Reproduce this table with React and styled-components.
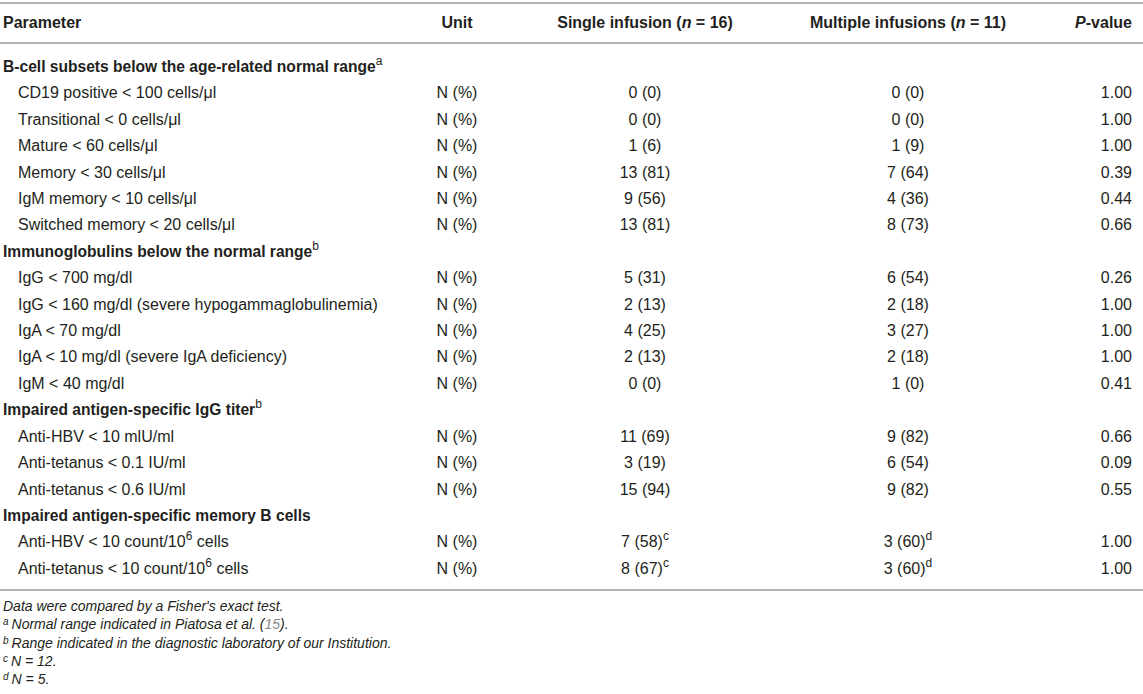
import styled, { createGlobalStyle } from 'styled-components';

const GlobalStyle = createGlobalStyle`
    body {
        margin: 0;
        background: #fff;
        font-family: "Liberation Sans", Arial, sans-serif;
        color: #231f20;
    }
`;

const Wrap = styled.div`
    width: 1143px;
    padding-top: 2px;
`;

const Table = styled.table`
    width: 100%;
    border-collapse: collapse;
    table-layout: fixed;
    font-size: 16px;
`;

const Head = styled.thead`
    border-top: 2px solid #b4b4b4;
    border-bottom: 2px solid #b4b4b4;
`;

const Th = styled.th`
    height: 38px;
    padding: 0 ${p => (p.$align === 'right' ? '11px' : '3px')};
    font-weight: bold;
    text-align: ${p => p.$align || 'center'};
    white-space: nowrap;
`;

const Body = styled.tbody`
    border-bottom: 2px solid #b4b4b4;

    tr:first-child td {
        padding-top: 10px;
    }
    tr:last-child td {
        padding-bottom: 7px;
    }
`;

const Td = styled.td`
    height: 26.4px;
    line-height: 26.4px;
    padding: 0 ${p => (p.$align === 'right' ? '11px' : '3px')};
    padding-left: ${p => (p.$indent ? '18px' : undefined)};
    text-align: ${p => p.$align || 'center'};
    font-weight: ${p => (p.$bold ? 'bold' : 'normal')};
    font-size: ${p => (p.$bold ? '15.6px' : '16px')};
    white-space: nowrap;
`;

const Sup = styled.sup`
    font-size: 12px;
    font-weight: normal;
    line-height: 0;
    vertical-align: 7px;
`;

const Notes = styled.div`
    padding: 6px 3px 0;
    font-size: 14px;
    font-style: italic;
    line-height: 18.3px;
`;

const Note = styled.div`
    white-space: nowrap;
`;

const NoteMark = styled.span`
    display: inline-block;
    font-size: 10px;
    line-height: 10px;
    vertical-align: 4px;
    margin-right: 3px;
`;

const Ref = styled.span`
    color: #8a8a8a;
`;

const sections = [
    {
        title: 'B-cell subsets below the age-related normal range',
        mark: 'a',
        rows: [
            ['CD19 positive < 100 cells/μl', '0 (0)', '0 (0)', '1.00'],
            ['Transitional < 0 cells/μl', '0 (0)', '0 (0)', '1.00'],
            ['Mature < 60 cells/μl', '1 (6)', '1 (9)', '1.00'],
            ['Memory < 30 cells/μl', '13 (81)', '7 (64)', '0.39'],
            ['IgM memory < 10 cells/μl', '9 (56)', '4 (36)', '0.44'],
            ['Switched memory < 20 cells/μl', '13 (81)', '8 (73)', '0.66'],
        ],
    },
    {
        title: 'Immunoglobulins below the normal range',
        mark: 'b',
        rows: [
            ['IgG < 700 mg/dl', '5 (31)', '6 (54)', '0.26'],
            ['IgG < 160 mg/dl (severe hypogammaglobulinemia)', '2 (13)', '2 (18)', '1.00'],
            ['IgA < 70 mg/dl', '4 (25)', '3 (27)', '1.00'],
            ['IgA < 10 mg/dl (severe IgA deficiency)', '2 (13)', '2 (18)', '1.00'],
            ['IgM < 40 mg/dl', '0 (0)', '1 (0)', '0.41'],
        ],
    },
    {
        title: 'Impaired antigen-specific IgG titer',
        mark: 'b',
        rows: [
            ['Anti-HBV < 10 mlU/ml', '11 (69)', '9 (82)', '0.66'],
            ['Anti-tetanus < 0.1 IU/ml', '3 (19)', '6 (54)', '0.09'],
            ['Anti-tetanus < 0.6 IU/ml', '15 (94)', '9 (82)', '0.55'],
        ],
    },
    {
        title: 'Impaired antigen-specific memory B cells',
        rows: [
            [<>Anti-HBV &lt; 10 count/10<Sup>6</Sup> cells</>, <>7 (58)<Sup>c</Sup></>, <>3 (60)<Sup>d</Sup></>, '1.00'],
            [<>Anti-tetanus &lt; 10 count/10<Sup>6</Sup> cells</>, <>8 (67)<Sup>c</Sup></>, <>3 (60)<Sup>d</Sup></>, '1.00'],
        ],
    },
];

export default function App() {
    return (
        <Wrap>
            <GlobalStyle />
            <Table>
                <colgroup>
                    <col style={{ width: 390 }} />
                    <col style={{ width: 134 }} />
                    <col style={{ width: 242 }} />
                    <col style={{ width: 284 }} />
                    <col />
                </colgroup>
                <Head>
                    <tr>
                        <Th $align="left">Parameter</Th>
                        <Th>Unit</Th>
                        <Th>Single infusion (<i>n</i> = 16)</Th>
                        <Th>Multiple infusions (<i>n</i> = 11)</Th>
                        <Th $align="right"><i>P</i>-value</Th>
                    </tr>
                </Head>
                <Body>
                    {sections.map(sec => [
                        <tr key={sec.title}>
                            <Td $align="left" $bold colSpan={5}>
                                {sec.title}
                                {sec.mark && <Sup>{sec.mark}</Sup>}
                            </Td>
                        </tr>,
                        ...sec.rows.map((r, i) => (
                            <tr key={sec.title + i}>
                                <Td $align="left" $indent>{r[0]}</Td>
                                <Td>N (%)</Td>
                                <Td>{r[1]}</Td>
                                <Td>{r[2]}</Td>
                                <Td $align="right">{r[3]}</Td>
                            </tr>
                        )),
                    ])}
                </Body>
            </Table>
            <Notes>
                <Note>Data were compared by a Fisher's exact test.</Note>
                <Note><NoteMark>a</NoteMark>Normal range indicated in Piatosa et al. (<Ref>15</Ref>).</Note>
                <Note><NoteMark>b</NoteMark>Range indicated in the diagnostic laboratory of our Institution.</Note>
                <Note><NoteMark>c</NoteMark><i>N</i> = 12.</Note>
                <Note><NoteMark>d</NoteMark><i>N</i> = 5.</Note>
            </Notes>
        </Wrap>
    );
}
